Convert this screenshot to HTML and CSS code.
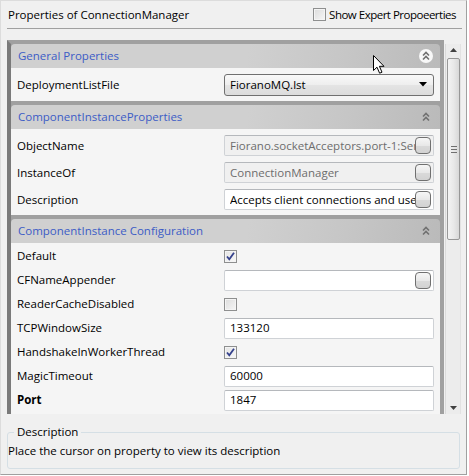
FILE: index.html
```html
<!DOCTYPE html>
<html lang="en">
<head>
    <meta charset="UTF-8">
    <title>Properties of ConnectionManager</title>
<link rel="stylesheet" href="styles.css">
</head>
<body>
<div class="window">
    <div class="titlebar">
        <span class="title">Properties of ConnectionManager</span>
        <label class="expert"><span class="cb"></span>Show Expert Propoeerties</label>
    </div>

    <div class="grid-wrap">
        <div class="grid">
            <div class="section">
                <div class="sec-head">
                    <span class="sec-title">General Properties</span>
                    <span class="collapse hover">
                        <svg width="14" height="14" viewBox="0 0 14 14"><path d="M4 6.5 L7 3.5 L10 6.5 M4 10.5 L7 7.5 L10 10.5" fill="none" stroke="#707070" stroke-width="1.6"/></svg>
                    </span>
                </div>
                <div class="sec-body first">
                    <div class="row tall">
                        <span class="name">DeploymentListFile</span>
                        <div class="val">
                            <div class="combo">
                                <span>FioranoMQ.lst</span>
                                <svg width="8" height="5" viewBox="0 0 8 5"><path d="M0 0 H8 L4 4.5 Z" fill="#000"/></svg>
                            </div>
                        </div>
                    </div>
                </div>
            </div>

            <div class="section">
                <div class="sec-head">
                    <span class="sec-title">ComponentInstanceProperties</span>
                    <span class="collapse">
                        <svg width="14" height="14" viewBox="0 0 14 14"><path d="M4 6.5 L7 3.5 L10 6.5 M4 10.5 L7 7.5 L10 10.5" fill="none" stroke="#707070" stroke-width="1.6"/></svg>
                    </span>
                </div>
                <div class="sec-body second">
                    <div class="row tall">
                        <span class="name">ObjectName</span>
                        <div class="val"><div class="field ro"><span class="txt">Fiorano.socketAcceptors.port-1:ServerSocketAcceptor</span><span class="dots"></span></div></div>
                    </div>
                    <div class="row tall">
                        <span class="name">InstanceOf</span>
                        <div class="val"><div class="field ro"><span class="txt">ConnectionManager</span><span class="dots"></span></div></div>
                    </div>
                    <div class="row tall">
                        <span class="name">Description</span>
                        <div class="val"><div class="field"><span class="txt">Accepts client connections and uses them</span><span class="dots"></span></div></div>
                    </div>
                </div>
            </div>

            <div class="section">
                <div class="sec-head">
                    <span class="sec-title">ComponentInstance Configuration</span>
                    <span class="collapse">
                        <svg width="14" height="14" viewBox="0 0 14 14"><path d="M4 6.5 L7 3.5 L10 6.5 M4 10.5 L7 7.5 L10 10.5" fill="none" stroke="#707070" stroke-width="1.6"/></svg>
                    </span>
                </div>
                <div class="sec-body third">
                    <div class="row">
                        <span class="name">Default</span>
                        <div class="val"><span class="cb on"><svg width="11" height="11" viewBox="0 0 11 11"><path d="M2 5.5 L4.3 8.3 L9 1.8" fill="none" stroke="#34418c" stroke-width="1.8"/></svg></span></div>
                    </div>
                    <div class="row">
                        <span class="name">CFNameAppender</span>
                        <div class="val"><div class="field"><span class="txt"></span><span class="dots"></span></div></div>
                    </div>
                    <div class="row">
                        <span class="name">ReaderCacheDisabled</span>
                        <div class="val"><span class="cb"></span></div>
                    </div>
                    <div class="row">
                        <span class="name">TCPWindowSize</span>
                        <div class="val"><div class="field"><span class="txt">133120</span></div></div>
                    </div>
                    <div class="row">
                        <span class="name">HandshakeInWorkerThread</span>
                        <div class="val"><span class="cb on"><svg width="11" height="11" viewBox="0 0 11 11"><path d="M2 5.5 L4.3 8.3 L9 1.8" fill="none" stroke="#34418c" stroke-width="1.8"/></svg></span></div>
                    </div>
                    <div class="row">
                        <span class="name">MagicTimeout</span>
                        <div class="val"><div class="field"><span class="txt">60000</span></div></div>
                    </div>
                    <div class="row">
                        <span class="name bold">Port</span>
                        <div class="val"><div class="field"><span class="txt">1847</span></div></div>
                    </div>
                </div>
            </div>
        </div>

        <div class="scrollbar">
            <svg class="arrow" width="7" height="4" viewBox="0 0 7 4"><path d="M0 4 L3.5 0 L7 4 Z" fill="#404040"/></svg>
            <div class="track">
                <div class="thumb">
                    <span class="grip"></span>
                </div>
            </div>
            <svg class="arrow" width="7" height="4" viewBox="0 0 7 4"><path d="M0 0 L3.5 4 L7 0 Z" fill="#404040"/></svg>
        </div>
    </div>

    <fieldset class="desc">
        <legend>Description</legend>
        <p class="desc-text">Place the cursor on property to view its description</p>
    </fieldset>

    <svg class="cursor" width="14" height="20" viewBox="0 0 14 20"><path d="M0.5 0.5 L0.5 15.5 L4 12.2 L6.6 18.2 L9 17.2 L6.4 11.3 L11 11.3 Z" fill="#fff" stroke="#000" stroke-width="1" stroke-linejoin="round"/></svg>
</div>
</body>
</html>
```

FILE: styles.css
```css
body{
    margin: 0;
    background: #fff;
    font-family: "Open Sans", "Noto Sans", sans-serif;
    font-size: 11.5px;
    color: #000;
}
.window{
    position: relative;
    box-sizing: border-box;
    width: 467px;
    height: 475px;
    background: #f0f0f0;
    border-top: 1px solid #dcdcdc;
    border-left: 1px solid #dcdcdc;
    border-right: 1px solid #a0a0a0;
    border-bottom: 1px solid #a0a0a0;
    padding: 0 4px 0 6px;
    overflow: hidden;
}

.titlebar{
    height: 27px;
    display: flex;
    flex-direction: row;
    justify-content: space-between;
    align-items: center;
    border-bottom: 1px solid #a0a0a0;
}
.title{
    padding-left: 1px;
}
.expert{
    display: flex;
    align-items: center;
    padding-right: 6px;
    letter-spacing: -0.5px;
}
.expert .cb{
    margin-right: 3px;
}

.cb{
    box-sizing: border-box;
    display: flex;
    justify-content: center;
    align-items: center;
    width: 13px;
    height: 13px;
    border: 1px solid #8e8f8f;
    background: linear-gradient(135deg, #dcdcdc, #f6f6f6);
    box-shadow: inset 0 0 0 1px #f4f4f4;
}
.cb.on{
    background: linear-gradient(135deg, #e4e4e4, #f8f8f8);
}

.grid-wrap{
    margin-top: 11px;
    height: 374px;
    display: flex;
    flex-direction: row;
}
.grid{
    width: 429px;
    border-left: 4px solid #7a7a7a;
    border-top: 4px solid #a0a0a0;
    border-right: 4px solid #a0a0a0;
    background: #a0a0a0;
    display: flex;
    flex-direction: column;
    gap: 4px;
    overflow: hidden;
}
.sec-head{
    height: 24px;
    display: flex;
    flex-direction: row;
    justify-content: space-between;
    align-items: center;
    padding: 0 7px;
    border-radius: 4px 4px 0 0;
    background: linear-gradient(100deg, #d0d0d0 0%, #d0d0d0 55%, #c6c6c6 78%, #bababa 100%);
}
.sec-title{
    color: #3c5cc6;
    margin-top: -1px;
}
.collapse{
    width: 14px;
    height: 14px;
    display: flex;
    border-radius: 50%;
}
.collapse.hover{
    background: #f8f8f8;
}

.sec-body{
    background: #f5f5f5;
}
.sec-body.first{
    padding: 3px 0;
}
.sec-body.second{
    padding: 3px 0 2px 0;
}
.sec-body.third{
    flex: 1;
    padding: 1px 0 4px 0;
}
.section:last-child{
    flex: 1;
    display: flex;
    flex-direction: column;
}
.row{
    height: 24px;
    display: flex;
    flex-direction: row;
    align-items: center;
    padding: 0 6px;
}
.row.tall{
    height: 27px;
}
.name{
    flex: 1;
    margin-top: -1px;
}
.name.bold{
    font-weight: bold;
}
.val{
    width: 210px;
    display: flex;
    align-items: center;
}

.combo{
    box-sizing: border-box;
    width: 100%;
    height: 22px;
    display: flex;
    justify-content: space-between;
    align-items: center;
    padding: 0 6px 0 5px;
    border: 1px solid #707070;
    border-radius: 3px;
    background: linear-gradient(180deg, #f9f9f9, #eeeeee 50%, #e4e4e4 51%, #dcdcdc);
}

.field{
    box-sizing: border-box;
    width: 100%;
    height: 21px;
    display: flex;
    align-items: center;
    padding: 0 2px 0 5px;
    border: 1px solid #cfd2d6;
    border-top-color: #b5b8bc;
    border-radius: 2px;
    background: #fff;
}
.field.ro{
    background: #f0f0f0;
    color: #6d6d6d;
}
.txt{
    flex: 1;
    white-space: nowrap;
    overflow: hidden;
    height: 16px;
    line-height: 16px;
}
.dots{
    box-sizing: border-box;
    width: 16px;
    height: 17px;
    flex: none;
    border: 1px solid #707070;
    border-radius: 4px;
    background: linear-gradient(180deg, #f6f6f6, #e8e8e8 50%, #dadada 51%, #d2d2d2);
}

.scrollbar{
    box-sizing: border-box;
    width: 16px;
    margin-left: 1px;
    margin-top: 4px;
    background: #ececec;
    border-left: 1px solid #dadada;
    border-right: 1px solid #e2e2e2;
    display: flex;
    flex-direction: column;
    align-items: center;
}
.arrow{
    flex: none;
    margin: 4px 0;
}
.track{
    flex: 1;
    width: 100%;
    padding-top: 2px;
}
.thumb{
    box-sizing: border-box;
    width: 13px;
    height: 182px;
    margin-left: 1px;
    border: 1px solid #979797;
    border-radius: 2px;
    background: linear-gradient(90deg, #f3f3f3, #e9e9e9 50%, #d8d8d8);
    display: flex;
    justify-content: center;
    align-items: center;
}
.grip{
    width: 6px;
    height: 5px;
    border-top: 1px solid #6f6f6f;
    border-bottom: 1px solid #6f6f6f;
    background: linear-gradient(180deg, transparent 2px, #6f6f6f 2px, #6f6f6f 3px, transparent 3px);
}

.desc{
    margin: 10px 2px 0 0;
    padding: 3px 0 9px 0;
    border: 1px solid #d5dfe5;
    border-radius: 3px;
}
.desc legend{
    margin-left: 6px;
    padding: 0 3px;
    line-height: 16px;
}
.desc-text{
    margin: 0;
    line-height: 16px;
}

.cursor{
    position: absolute;
    left: 372px;
    top: 54px;
}
```
